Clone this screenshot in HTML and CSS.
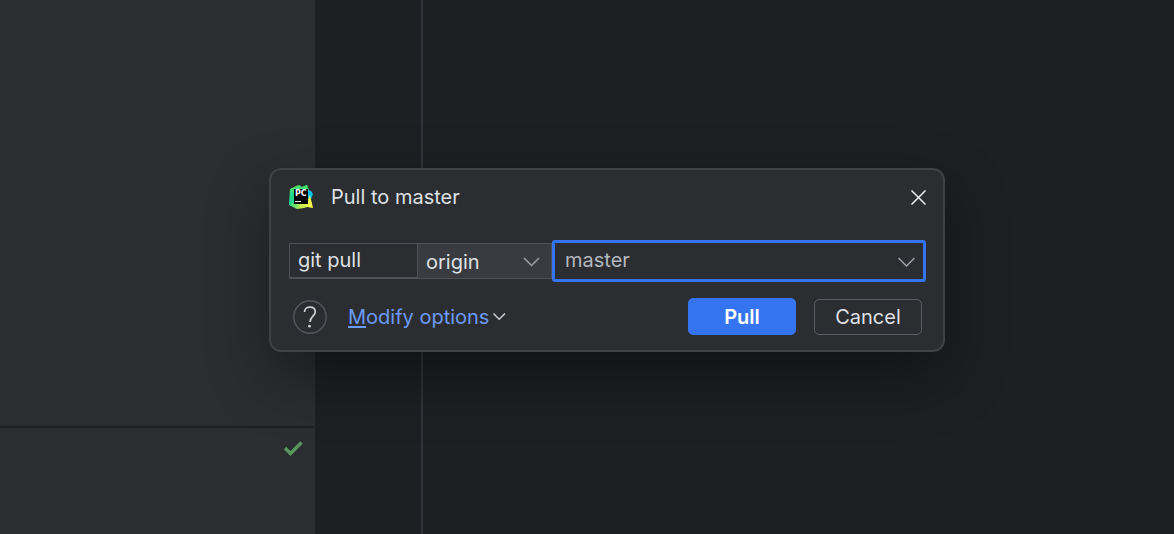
FILE: index.html
```
<!DOCTYPE html>
<html lang="en">
<head>
    <meta charset="UTF-8">
    <title>Pull to master</title>
    <link rel="stylesheet" href="styles.css">
</head>
<body>
    <div class="ide">
        <div class="side">
            <div class="side-top"></div>
            <div class="side-bottom">
                <svg class="check" width="20" height="16" viewBox="0 0 20 16"><path d="M2 8L7.500 13.500L18.500 2.500" stroke-width="3.400"/></svg>
            </div>
        </div>
        <div class="gutter"></div>
        <div class="editor"></div>
    </div>

    <form class="dialog" role="dialog" aria-labelledby="title">
        <div class="dialog-header">
            <svg class="logo" width="26" height="26" viewBox="0 0 26 26">
                <defs>
                    <linearGradient id="green" x1="0" y1="0" x2="0.300" y2="1">
                        <stop offset="0" stop-color="#7be84f"/>
                        <stop offset="0.400" stop-color="#21d789"/>
                        <stop offset="1" stop-color="#1ed19a"/>
                    </linearGradient>
                    <linearGradient id="yellow" x1="0" y1="0" x2="1" y2="0">
                        <stop offset="0" stop-color="#21d789"/>
                        <stop offset="0.500" stop-color="#c5ee4c"/>
                        <stop offset="1" stop-color="#fcf84a"/>
                    </linearGradient>
                </defs>
                <path fill="url(#green)" d="M1 5L7 2L10 1L13 3L18 1L20 7L19 20L8 24L0 21Z"/>
                <path fill="#3fe06c" d="M13 3L18 1L20 6L13 6Z"/>
                <path fill="#07c3f2" d="M19 6L22 7L24 10L22 15L18 15Z"/>
                <path fill="url(#yellow)" d="M2 19L18 18L21 11L24 24L18 23L15 24L8 25L0 21Z"/>
                <path fill="#000" d="M5 5H19V20H5Z"/>
                <text class="logo-text" x="6" y="12">PC</text>
                <path fill="#fff" d="M6 17H12V18H6Z"/>
            </svg>
            <h1 id="title">Pull to master</h1>
            <button type="button" class="close-btn" aria-label="Close">
                <svg width="16" height="16" viewBox="0 0 16 16"><path d="M1.500 1.500L15.500 15.500M15.500 1.500L1.500 15.500"/></svg>
            </button>
        </div>

        <div class="command">
            <input type="text" class="cmd" value="git pull" aria-label="Command" readonly>
            <div class="select-wrapper remote">
                <select aria-label="Remote"><option>origin</option></select>
                <svg class="arrow" width="18" height="10" viewBox="0 0 18 10"><path d="M1 1L8.500 8.500L16 1"/></svg>
            </div>
            <div class="select-wrapper branch">
                <select aria-label="Branch"><option>master</option></select>
                <svg class="arrow" width="18" height="10" viewBox="0 0 18 10"><path d="M1.500 1L9.500 9L17.500 1"/></svg>
            </div>
        </div>

        <div class="dialog-footer">
            <button type="button" class="help-btn" aria-label="Help">
                <svg width="34" height="34" viewBox="0 0 34 34">
                    <circle class="ring" cx="17" cy="17" r="16.200"/>
                    <path d="M11.500 12C11.500 9 14 7.200 17 7.200C20 7.200 22.300 9 22.300 12C22.300 16 17 16.500 17 22"/>
                    <circle class="dot" cx="16.500" cy="26.200" r="1.400"/>
                </svg>
            </button>
            <a href="#" class="options"><span><u>M</u>odify options</span>
                <svg width="14" height="9" viewBox="0 0 14 9"><path d="M1.500 1.500L7.200 7.200L13 1.500"/></svg>
            </a>
            <button type="submit" class="btn btn-primary">Pull</button>
            <button type="button" class="btn">Cancel</button>
        </div>
    </form>
</body>
</html>
```

FILE: styles.css
```
* {
    box-sizing: border-box;
}

body {
    margin: 0;
    background: #1e1f22;
    color: #dfe1e5;
    font-family: Inter, Roboto, sans-serif;
    font-size: 20px;
    line-height: 24px;
    overflow: hidden;
}

svg {
    display: block;
    fill: none;
}

.ide {
    display: flex;
    height: 100vh;
}

.side {
    width: 315px;
    display: flex;
    flex-direction: column;
    background: #2b2d30;
}

.side-top {
    flex: 1;
    margin-right: 2px;
    border-bottom: 2px solid #1e1f22;
}

.side-bottom {
    height: 106px;
    padding: 12px;
    display: flex;
    justify-content: flex-end;
}

.check {
    stroke: #57965c;
}

.gutter {
    width: 108px;
    border-right: 2px solid #313438;
}

.editor {
    flex: 1;
}

/* floats over the editor */
.dialog {
    position: absolute;
    top: 168px;
    left: 269px;
    right: 229px;
    padding: 12px 17px 15px 18px;
    background: #2b2d30;
    border: 2px solid #3f4144;
    border-radius: 12px;
    box-shadow: 0 24px 60px rgba(0, 0, 0, 0.4);
}

.dialog-header {
    display: flex;
    align-items: center;
    height: 30px;
    margin-bottom: 28px;
}

.logo-text {
    fill: #fff;
    font: bold 8px "DejaVu Sans", sans-serif;
}

h1 {
    flex: 1;
    margin: 0 0 0 16px;
    font-size: 20px;
    font-weight: 400;
}

button {
    font: inherit;
    color: inherit;
    padding: 0;
    background: none;
    border: none;
    cursor: pointer;
}

.close-btn svg {
    stroke: #f0f1f2;
    stroke-width: 1.5;
}

.command {
    display: flex;
    align-items: center;
    margin-bottom: 16px;
}

.cmd,
select {
    font: inherit;
    color: #dfe1e5;
    background: #2b2d30;
    outline: none;
    border-radius: 0;
    padding: 0 8px;
    height: 36px;
}

.cmd {
    width: 128px;
    border: 1px solid #4e5157;
    border-bottom-width: 2px;
    border-right: none;
    padding-bottom: 1px;
}

.select-wrapper {
    position: relative;
}

.select-wrapper select {
    width: 100%;
    appearance: none;
}

.remote {
    width: 135px;
}

.remote select {
    background: #393b40;
    border: 1px solid #4e5157;
    padding-top: 2px;
}

.branch {
    flex: 1;
}

.branch select {
    height: 42px;
    border: 3px solid #3574f0;
    border-radius: 3px;
    padding: 0 10px 2px;
    color: #b4b8bf;
}

.arrow {
    position: absolute;
    right: 11px;
    top: 50%;
    margin-top: -4px;
    stroke: #9da0a8;
    stroke-width: 1.5;
    pointer-events: none;
}

.dialog-footer {
    display: flex;
    align-items: center;
    gap: 18px;
    padding: 0 4px;
}

.help-btn path {
    stroke: #ced0d6;
    stroke-width: 1.7;
}

.help-btn .ring {
    stroke: #55585e;
    stroke-width: 1.4;
}

.help-btn .dot {
    fill: #ced0d6;
}

.options {
    display: flex;
    align-items: center;
    gap: 3px;
    margin-left: 3px;
    margin-right: auto;
    color: #6b9bfa;
    text-decoration: none;
}

.options u {
    text-decoration-thickness: 2px;
    text-underline-offset: 2px;
}

.options svg {
    stroke: #ced0d6;
    stroke-width: 1.5;
}

.btn {
    width: 108px;
    height: 36px;
    border: 1px solid #5a5d63;
    border-radius: 5px;
}

.btn-primary {
    height: 37px;
    color: #fff;
    font-weight: 600;
    background: #3574f0;
    border-color: #3574f0;
}
```
